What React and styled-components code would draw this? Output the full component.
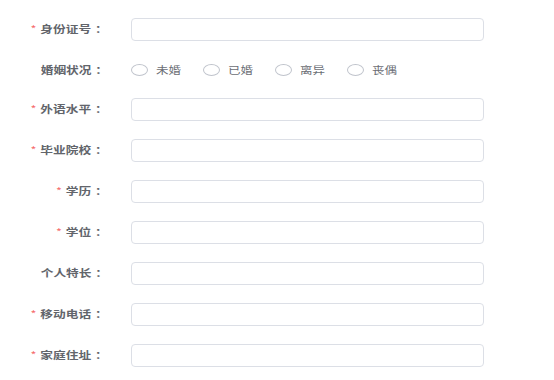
import React from 'react';
import styled, { createGlobalStyle } from 'styled-components';

const GlobalStyle = createGlobalStyle`
  body {
    margin: 0;
    background: #fff;
    font-family: "Noto Sans CJK SC", "Noto Sans", sans-serif;
  }
`;

const fields = [
  { label: '身份证号', required: true },
  { label: '婚姻状况', radios: ['未婚', '已婚', '离异', '丧偶'] },
  { label: '外语水平', required: true },
  { label: '毕业院校', required: true },
  { label: '学历', required: true },
  { label: '学位', required: true },
  { label: '个人特长' },
  { label: '移动电话', required: true },
  { label: '家庭住址', required: true },
];

export default function App() {
  return (
    <>
      <GlobalStyle />
      <Form>
        {fields.map(f => (
          <Row key={f.label} $short={!!f.radios}>
            <Label>
              <LabelText>
                {f.required && <Star>*</Star>}
                {f.label}
                <Colon>：</Colon>
              </LabelText>
            </Label>
            {f.radios ? (
              <RadioGroup>
                {f.radios.map(r => (
                  <Radio key={r}>
                    <Circle />
                    <RadioText>{r}</RadioText>
                  </Radio>
                ))}
              </RadioGroup>
            ) : (
              <Input />
            )}
          </Row>
        ))}
      </Form>
    </>
  );
}

const Form = styled('div')`
  display: flex;
  flex-direction: column;
  gap: 18px;
  padding-top: 17.5px;
`;

const Row = styled('div')`
  display: flex;
  align-items: center;
  height: ${props => (props.$short ? '21px' : '23px')};
  padding-top: ${props => (props.$short ? '2px' : '0')};
  box-sizing: border-box;
`;

const Label = styled('div')`
  width: 131px;
  flex-shrink: 0;
  box-sizing: border-box;
  padding-right: 23px;
  display: flex;
  justify-content: flex-end;
`;

const LabelText = styled('span')`
  display: inline-block;
  white-space: nowrap;
  font-size: 10px;
  line-height: 12px;
  font-weight: 700;
  color: #62656b;
  transform: scaleX(1.27);
  transform-origin: right center;
`;

const Star = styled('span')`
  color: #f56c6c;
  font-weight: 400;
  margin-right: 3px;
`;

const Colon = styled('span')`
  margin-left: 3px;
`;

const Input = styled('div')`
  width: 353px;
  height: 23px;
  box-sizing: border-box;
  border: 1px solid #dcdfe6;
  border-radius: 4px;
  background: #fff;
`;

const RadioGroup = styled('div')`
  display: flex;
  align-items: center;
`;

const Radio = styled('div')`
  display: flex;
  align-items: center;
  margin-right: 27px;
`;

const Circle = styled('span')`
  width: 17px;
  height: 12px;
  box-sizing: border-box;
  border: 1px solid #c0c4cc;
  border-radius: 50%;
  background: #fff;
`;

const RadioText = styled('span')`
  display: inline-block;
  margin-left: 8px;
  font-size: 10px;
  line-height: 12px;
  color: #6b6e75;
  transform: scaleX(1.25);
  transform-origin: left center;
`;
